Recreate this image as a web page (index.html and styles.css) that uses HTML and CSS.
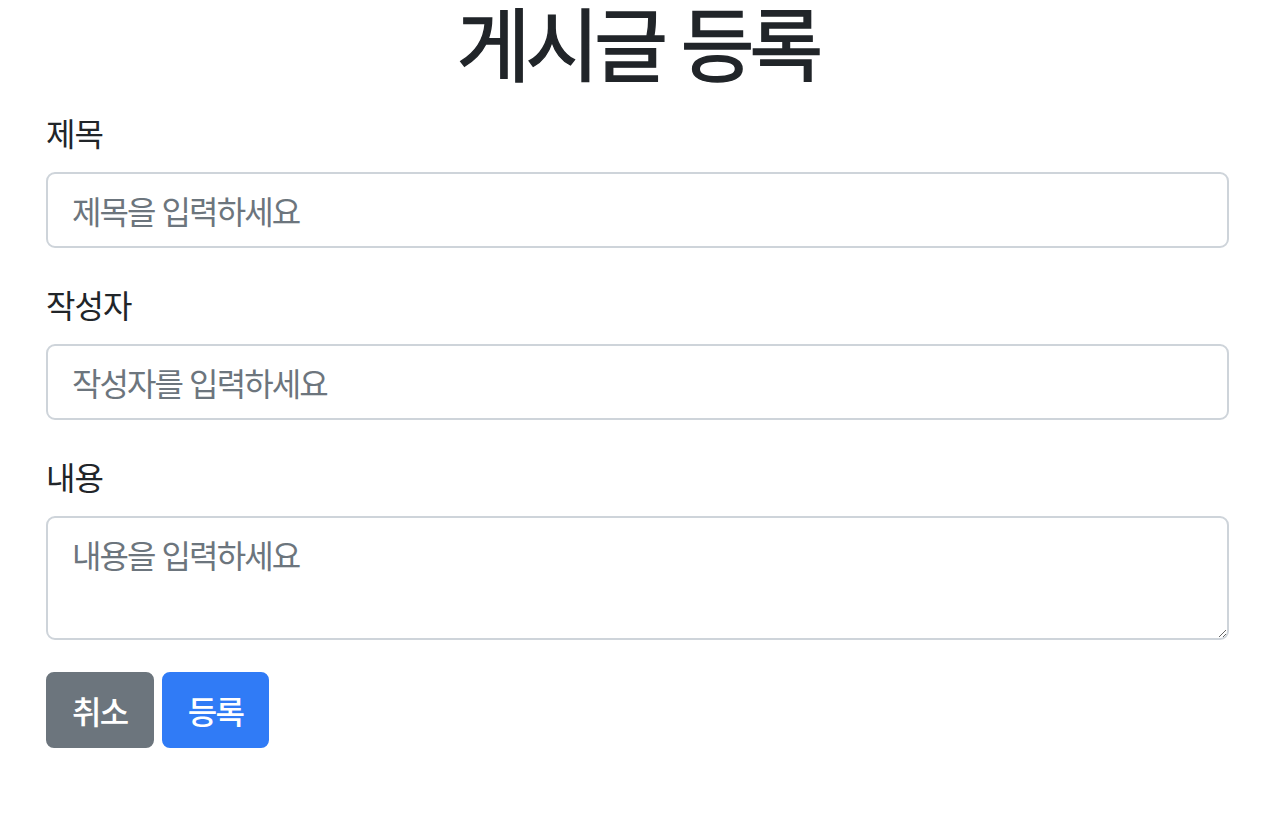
FILE: index.html
```html
<!DOCTYPE html>
<html lang="ko">
<head>
    <meta charset="UTF-8">
    <meta name="viewport" content="width=device-width, initial-scale=1.0">
    <title>게시글 등록</title>
    <link rel="stylesheet" href="styles.css">
</head>
<body>
    <div class="container">
        <h1>게시글 등록</h1>
        <form>
            <div class="form-group">
                <label for="title">제목</label>
                <input type="text" id="title" class="form-control" placeholder="제목을 입력하세요">
            </div>
            <div class="form-group">
                <label for="writer">작성자</label>
                <input type="text" id="writer" class="form-control" placeholder="작성자를 입력하세요">
            </div>
            <div class="form-group">
                <label for="content">내용</label>
                <textarea id="content" class="form-control" rows="2" placeholder="내용을 입력하세요"></textarea>
            </div>
            <div class="buttons">
                <button type="button" class="btn btn-secondary">취소</button>
                <button type="submit" class="btn btn-primary">등록</button>
            </div>
        </form>
    </div>
</body>
</html>
```

FILE: styles.css
```css
body {
    margin: 0;
    font-family: "Noto Sans CJK KR", "Noto Sans", sans-serif;
    color: #212529;
    background-color: #ffffff;
    letter-spacing: -0.06em;
}
.container {
    width: 1183px;
    margin-left: 46px;
}
h1 {
    margin: 0 0 28px;
    font-size: 80px;
    font-weight: 400;
    line-height: 80px;
    letter-spacing: -0.06em;
    text-align: center;
    -webkit-text-stroke: 1.4px #212529;
}
.form-group {
    margin-bottom: 32px;
}
.form-group label {
    display: block;
    margin-bottom: 16px;
    font-size: 32px;
    line-height: 48px;
}
.form-control {
    display: block;
    width: 100%;
    box-sizing: border-box;
    padding: 12px 24px;
    font-family: inherit;
    font-size: 32px;
    line-height: 48px;
    letter-spacing: -0.06em;
    color: #212529;
    background-color: #ffffff;
    border: 2px solid #ced4da;
    border-radius: 9px;
    outline: none;
}
.form-control::placeholder {
    color: #6c757d;
}
textarea.form-control {
    height: 124px;
    resize: vertical;
}
.buttons {
    display: flex;
    gap: 8px;
}
.btn {
    padding: 12px 24px;
    font-family: inherit;
    font-size: 32px;
    font-weight: 500;
    line-height: 48px;
    letter-spacing: -0.05em;
    color: #ffffff;
    border: 2px solid transparent;
    border-radius: 8px;
    cursor: pointer;
}
.btn-secondary {
    background-color: #6c757d;
    border-color: #6c757d;
}
.btn-primary {
    background-color: #307bf6;
    border-color: #307bf6;
}
```
